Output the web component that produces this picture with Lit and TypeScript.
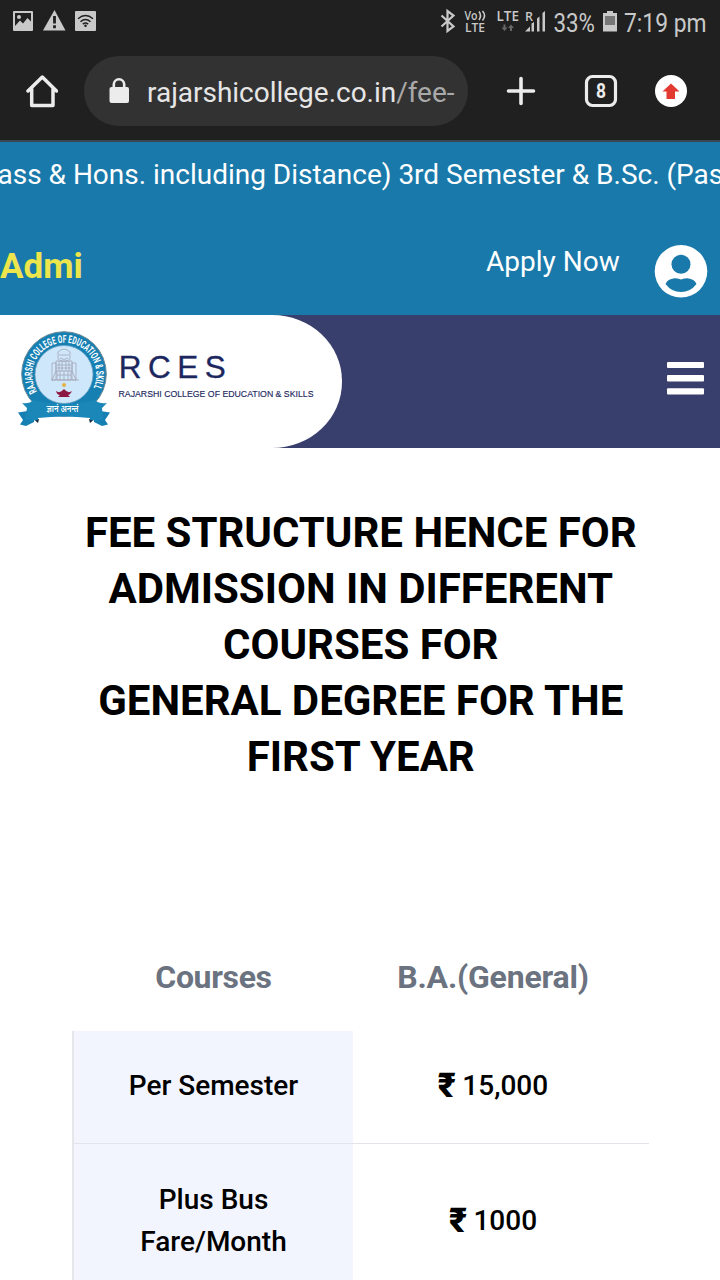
import { LitElement, html, css } from "lit";
import { customElement } from "lit/decorators.js";

@customElement("status-bar")
class StatusBar extends LitElement {
  static styles = css`
    :host { display: flex; justify-content: space-between; height: 43px; background: #202020; color: #c9c9c9; font-family: Roboto, sans-serif; }
    svg { display: block; flex: none; }
    .big { font-size: 25px; font-family: Roboto, sans-serif; }
    .small { font-family: "Open Sans", sans-serif; font-weight: 600; }
  `;
  render() {
    return html`
      <svg width="110" height="43" viewBox="0 0 110 43">
        <g fill="#c9c9c9">
          <rect x="13" y="11" width="20" height="20" rx="1" />
          <path d="M54.5 10 65.5 30.500H43z" />
          <rect x="75" y="11" width="21" height="20" rx="1" />
        </g>
        <path fill="#202020" d="M15 13h16v8.500l-3.500-3.500-4.500 5.500-3-3-5 5.500z" />
        <circle cx="19" cy="17" r="2" fill="#c9c9c9" />
        <path d="M54.500 16v7.500M54.500 25.300v3" stroke="#202020" stroke-width="2.800" />
        <g fill="none" stroke="#202020" stroke-width="1.500">
          <path d="M78 18.800q7.500-6.500 15 0M80.500 21.700q5-4.500 10 0M82.800 24.200q2.700-2.200 5.400 0" />
        </g>
        <circle cx="85.500" cy="25.700" r="1.300" fill="#202020" />
      </svg>
      <svg width="280" height="43" viewBox="440 0 280 43">
        <path d="M441.500 15.500 453.500 26.500l-6 4.500v-20l6 4.500-12 11" fill="none" stroke="#c9c9c9" stroke-width="2.200" />
        <g class="small" fill="#c9c9c9">
          <text x="464.500" y="20" font-size="12" textLength="13" lengthAdjust="spacingAndGlyphs">Vo</text>
          <text x="465" y="31.500" font-size="12" textLength="20" lengthAdjust="spacingAndGlyphs">LTE</text>
          <text x="496.500" y="21" font-size="13.500" textLength="22.500" lengthAdjust="spacingAndGlyphs">LTE</text>
          <text x="525" y="20.500" font-size="12.500" textLength="8" lengthAdjust="spacingAndGlyphs">R</text>
        </g>
        <path d="M479 11.500q3 4 0 8.500M482.500 11q4 4.500 0 9.500" fill="none" stroke="#c9c9c9" stroke-width="1.600" />
        <path d="M504.500 31l-3-3.500h2v-3h2v3h2zM511 24.500l3 3.500h-2v3h-2v-3h-2z" fill="#666" />
        <path d="M525 31.500l5-5v5zM531.500 31.500v-8l2.500-1.500v9.500zM537 31.500V18.500l2.500-2v15zM542.500 31.500v-18.500l2.500-2v20.500z" fill="#c9c9c9" />
        <text class="big" x="553.500" y="31.500" fill="#c9c9c9" textLength="41.500" lengthAdjust="spacingAndGlyphs">33%</text>
        <path d="M603 13h4v-2h6v2h4v18.500h-14z" fill="#c9c9c9" />
        <path d="M605 16h10v9h-10z" fill="#777" />
        <text class="big" x="624" y="31.500" fill="#c9c9c9" textLength="82.500" lengthAdjust="spacingAndGlyphs">7:19 pm</text>
      </svg>
    `;
  }
}

@customElement("browser-bar")
class BrowserBar extends LitElement {
  static styles = css`
    :host { display: flex; align-items: flex-start; box-sizing: border-box; height: 99px; padding: 13px 0 0 26px; background: #202020; border-bottom: 2px solid #3a474e; font-family: Roboto, sans-serif; }
    svg { display: block; flex: none; }
    .home { margin-right: 26px; }
    .pill { display: flex; align-items: center; box-sizing: border-box; width: 384px; height: 70px; border-radius: 35px; background: #323232; padding-left: 24px; overflow: hidden; }
    .url { margin-left: 17px; padding-top: 4px; font-size: 28px; line-height: 40px; color: #e6e6e6; white-space: nowrap; letter-spacing: -0.02px; }
    .path { color: #a9a9a9; }
    .num { font: 700 20px Roboto, sans-serif; }
  `;
  render() {
    return html`
      <svg class="home" width="32" height="70" viewBox="26 56 32 70">
        <path d="M28 91 42.300 77 56.500 91M31.700 89v16.500h21.300V89" fill="none" stroke="#ececec" stroke-width="3.500" stroke-linecap="round" stroke-linejoin="round" />
      </svg>
      <div class="pill">
        <svg width="22" height="70" viewBox="108 56 22 70">
          <rect x="109.500" y="87" width="19.500" height="16" rx="2" fill="#ececec" />
          <path d="M113.800 88v-3.500a5.200 5.200 0 0 1 10.400 0V88" fill="none" stroke="#ececec" stroke-width="2.600" />
        </svg>
        <div class="url">rajarshicollege.co.in<span class="path">/fee-</span></div>
      </div>
      <svg width="252" height="70" viewBox="468 56 252 70">
        <path d="M508.500 91H533.500M521 78.500V103.500" stroke="#ececec" stroke-width="3.600" stroke-linecap="round" />
        <rect x="586.500" y="76.500" width="29" height="29" rx="6" fill="none" stroke="#ececec" stroke-width="3.200" />
        <text class="num" x="596" y="97.700" fill="#ececec" textLength="10" lengthAdjust="spacingAndGlyphs">8</text>
        <circle cx="671" cy="91" r="16" fill="#fff" />
        <path d="M671 83.500l8.500 8h-4.500v7.500h-8.500v-7.500h-4z" fill="#e23a31" />
      </svg>
    `;
  }
}

@customElement("top-strip")
class TopStrip extends LitElement {
  static styles = css`
    :host { display: block; box-sizing: border-box; height: 173px; background: #1979aa; color: #fff; font-family: Roboto, sans-serif; overflow: hidden; }
    .ticker { padding-top: 12px; height: 81px; box-sizing: border-box; font-size: 28px; line-height: 42px; letter-spacing: -0.01px; white-space: nowrap; margin-left: -2.5px; }
    .row { display: flex; align-items: flex-start; }
    .admi { flex: 1; padding-top: 19px; font-size: 35px; line-height: 49px; font-weight: 700; color: #ece54c; }
    .apply { padding-top: 18px; font-size: 28px; line-height: 42px; white-space: nowrap; width: 168px; }
    svg { display: block; flex: none; }
  `;
  render() {
    return html`
      <div class="ticker">ass &amp; Hons. including Distance) 3rd Semester &amp; B.Sc. (Pas</div>
      <div class="row">
        <div class="admi">Admi</div>
        <div class="apply">Apply Now</div>
        <svg width="66" height="92" viewBox="654 223 66 92">
          <circle cx="681" cy="271.300" r="26.300" fill="#fff" />
          <circle cx="681" cy="264.300" r="9.500" fill="#1979aa" />
          <path d="M665.500 284q2-5 9-5.800q3 0 6.500 1.200q3.500-1.200 6.500-1.200q7 .8 9 5.800q-6 8-15.500 8t-15.500-8z" fill="#1979aa" />
        </svg>
      </div>
    `;
  }
}

@customElement("site-nav")
class SiteNav extends LitElement {
  static styles = css`
    :host { display: flex; justify-content: space-between; height: 133px; background: #393f6d; }
    .brand { width: 342px; background: #fff; border-radius: 0 70px 70px 0 / 0 66px 66px 0; }
    svg { display: block; }
    .seal { font-family: Roboto, sans-serif; font-weight: 700; font-size: 10.800px; }
    .deva { font-family: "Noto Sans", "Noto Sans Devanagari", sans-serif; font-weight: 600; font-size: 9.500px; }
    .name { font-family: "Liberation Sans", Arial, sans-serif; }
  `;
  render() {
    return html`
      <div class="brand">
        <svg width="342" height="133" viewBox="0 315 342 133">
          <defs><path id="arc" d="M37 391.500A32 32 0 1 1 91.500 391.500" /></defs>
          <circle cx="64" cy="374" r="42.300" fill="#1680b3" stroke="#6d8796" stroke-width="1" />
          <circle cx="64" cy="374.500" r="29" fill="#cfe7fa" stroke="#6ea5c5" stroke-width=".8" />
          <text class="seal" fill="#fff"><textPath href="#arc" startOffset="0" textLength="131" lengthAdjust="spacingAndGlyphs">RAJARSHI COLLEGE OF EDUCATION &amp; SKILL</textPath></text>
          <g fill="none" stroke="#a3a5b8" stroke-width=".8">
            <path d="M58 352q6-6 12 0v7q-6 5-12 0zM59 355h10M60 358q4 3 8 0M56 361h16v10H56zM59 361v10M62 361v10M66 361v10M69 361v10M52 363h4v17h-4zM72 363h4v17h-4zM56 371l-4 9M72 371l4 9M57 371v9h14v-9M60 371v9M64 371v9M68 371v9M51 380h28M57 365h14M57 368h14M57 375h14" />
          </g>
          <circle cx="64" cy="385" r="2" fill="#e5b23f" />
          <path d="M56 391q4 3 8-2 4 5 8 2-2 4-4 4l2 2H58l2-2q-3 0-4-4z" fill="#8d1743" />
          <path d="M18 412.500l16-2.500v12l-8 4-6-1.500 3-4.500zM110 412.500l-16-2.500v12l8 4 6-1.500-3-4.500z" fill="#1680b3" />
          <path d="M33 418.500l6 .5-1 4zM95 418.500l-6 .5 1 4z" fill="#152335" />
          <path d="M22 403q8 1 11-3 31 8 62 0 4 4 12 3l-5 5 1 11q-5 2-13 1v-2q-26-3-52 0v2q-8 1-13-1l2-11z" fill="#1b86b8" />
          <text class="deva" x="46.500" y="412" fill="#fff" textLength="32" lengthAdjust="spacingAndGlyphs">ज्ञानं अनन्तं</text>
          <g class="name" fill="#1c2760">
            <text x="118.800" y="378.300" font-size="31.500" textLength="107" lengthAdjust="spacing" stroke="#1c2760" stroke-width=".3">RCES</text>
            <text x="118.500" y="397" font-size="9.800" textLength="195" lengthAdjust="spacingAndGlyphs" stroke="#1c2760" stroke-width=".15">RAJARSHI COLLEGE OF EDUCATION &amp; SKILLS</text>
          </g>
        </svg>
      </div>
      <svg width="54" height="133" viewBox="666 315 54 133">
        <g fill="#fff">
          <rect x="667" y="362" width="37" height="6" rx="1" />
          <rect x="667" y="375" width="37" height="6.500" rx="1" />
          <rect x="667" y="388.300" width="37" height="6.300" rx="1" />
        </g>
      </svg>
    `;
  }
}

@customElement("fee-page")
class FeePage extends LitElement {
  static styles = css`
    :host { display: block; font-family: Roboto, sans-serif; color: #000; }
    h1 { margin: 0; padding-top: 57px; height: 474px; box-sizing: border-box; font-size: 42px; line-height: 56px; font-weight: 700; text-align: center; padding-left: 1.5px; letter-spacing: -0.02px; white-space: nowrap; }
    .grid { display: grid; grid-template-columns: 281px 296px; margin-left: 72px; text-align: center; }
    .head { height: 109px; display: flex; align-items: center; justify-content: center; font-size: 32px; font-weight: 700; color: #6b7280; }
    .head span { letter-spacing: -0.35px; padding-left: 2px; }
    .head.gen span { letter-spacing: -0.2px; }
    .head.gen { padding-right: 18px; }
    .label, .val { box-sizing: border-box; display: flex; align-items: center; justify-content: center; font-size: 28px; line-height: 42px; font-weight: 500; }
    .label { background: #f3f5fe; border-left: 2px solid #e5e7eb; }
    .val { padding-right: 15px; }
    .r1 { height: 113px; border-bottom: 1px solid #e2e4e9; padding-bottom: 2px; }
    .r2 { height: 154px; }
    .rs { font-weight: 900; font-size: 34px; margin: 0 6.500px 0 -1px; padding-bottom: 3px; }
  `;
  render() {
    return html`
      <h1>FEE STRUCTURE HENCE FOR<br />ADMISSION IN DIFFERENT<br />COURSES FOR<br />GENERAL DEGREE FOR THE<br />FIRST YEAR</h1>
      <div class="grid">
        <div class="head"><span>Courses</span></div>
        <div class="head gen"><span>B.A.(General)</span></div>
        <div class="label r1">Per Semester</div>
        <div class="val r1"><span class="rs">₹</span>15,000</div>
        <div class="label r2">Plus Bus<br />Fare/Month</div>
        <div class="val r2"><span class="rs">₹</span>1000</div>
      </div>
    `;
  }
}

@customElement("app-root")
class AppRoot extends LitElement {
  static styles = css`
    :host { display: block; width: 720px; height: 1280px; overflow: hidden; background: #fff; }
  `;
  render() {
    return html`
      <status-bar></status-bar>
      <browser-bar></browser-bar>
      <top-strip></top-strip>
      <site-nav></site-nav>
      <fee-page></fee-page>
    `;
  }
}
